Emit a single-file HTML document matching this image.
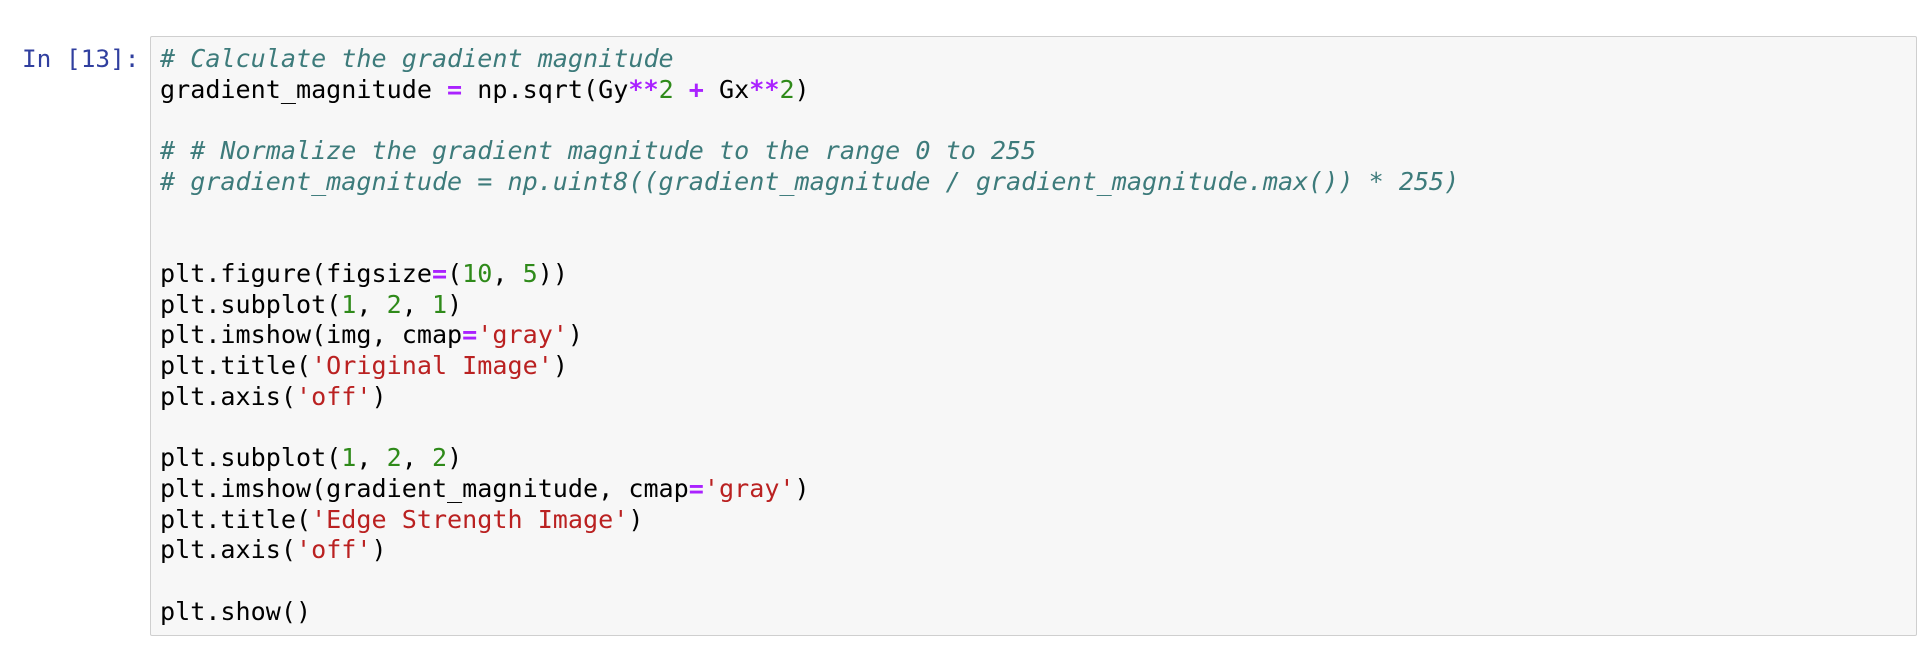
<!DOCTYPE html>
<html><head><meta charset="utf-8"><style>
html,body{margin:0;padding:0;background:#fff;width:1928px;height:656px;overflow:hidden}
.p{position:absolute;left:22px;top:44px;font:24.4px/30.7px "DejaVu Sans Mono","Liberation Mono",monospace;color:#303F9F;white-space:pre}
.box{position:absolute;left:150px;top:36px;width:1767px;height:600px;background:#f7f7f7;border:1px solid #cfcfcf;border-radius:2px;box-sizing:border-box}
pre{position:absolute;left:160px;top:44px;margin:0;font:25.1px/30.7px "DejaVu Sans Mono","Liberation Mono",monospace;color:#000}
.c{color:#3D7B7B;font-style:italic}
.o{color:#AA22FF;font-weight:bold}
.n{color:#2f8a1a}
.s{color:#BA2121}
</style></head><body>
<div class="p">In [13]:</div>
<div class="box"></div>
<pre><span class="c"># Calculate the gradient magnitude</span>
gradient_magnitude <span class="o">=</span> np.sqrt(Gy<span class="o">**</span><span class="n">2</span> <span class="o">+</span> Gx<span class="o">**</span><span class="n">2</span>)

<span class="c"># # Normalize the gradient magnitude to the range 0 to 255</span>
<span class="c"># gradient_magnitude = np.uint8((gradient_magnitude / gradient_magnitude.max()) * 255)</span>


plt.figure(figsize<span class="o">=</span>(<span class="n">10</span>, <span class="n">5</span>))
plt.subplot(<span class="n">1</span>, <span class="n">2</span>, <span class="n">1</span>)
plt.imshow(img, cmap<span class="o">=</span><span class="s">'gray'</span>)
plt.title(<span class="s">'Original Image'</span>)
plt.axis(<span class="s">'off'</span>)

plt.subplot(<span class="n">1</span>, <span class="n">2</span>, <span class="n">2</span>)
plt.imshow(gradient_magnitude, cmap<span class="o">=</span><span class="s">'gray'</span>)
plt.title(<span class="s">'Edge Strength Image'</span>)
plt.axis(<span class="s">'off'</span>)

plt.show()</pre>
</body></html>
